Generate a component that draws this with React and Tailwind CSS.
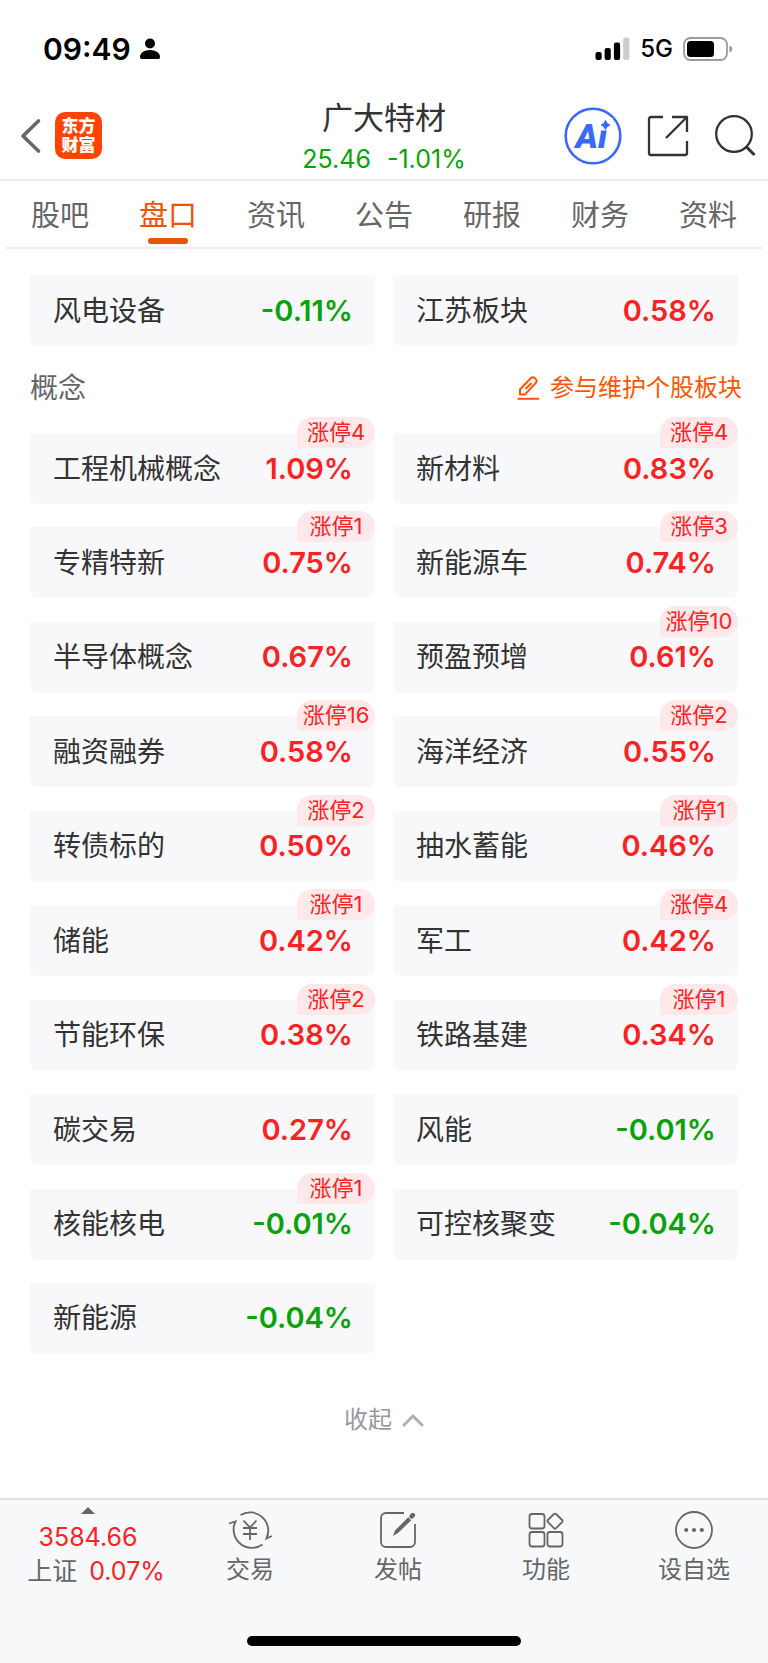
import React, { useState } from "react";

const sectors = [
  { name: "风电设备", change: "-0.11%" },
  { name: "江苏板块", change: "0.58%" },
];

const concepts = [
  { name: "工程机械概念", change: "1.09%", limitUp: 4 },
  { name: "新材料", change: "0.83%", limitUp: 4 },
  { name: "专精特新", change: "0.75%", limitUp: 1 },
  { name: "新能源车", change: "0.74%", limitUp: 3 },
  { name: "半导体概念", change: "0.67%" },
  { name: "预盈预增", change: "0.61%", limitUp: 10 },
  { name: "融资融券", change: "0.58%", limitUp: 16 },
  { name: "海洋经济", change: "0.55%", limitUp: 2 },
  { name: "转债标的", change: "0.50%", limitUp: 2 },
  { name: "抽水蓄能", change: "0.46%", limitUp: 1 },
  { name: "储能", change: "0.42%", limitUp: 1 },
  { name: "军工", change: "0.42%", limitUp: 4 },
  { name: "节能环保", change: "0.38%", limitUp: 2 },
  { name: "铁路基建", change: "0.34%", limitUp: 1 },
  { name: "碳交易", change: "0.27%" },
  { name: "风能", change: "-0.01%" },
  { name: "核能核电", change: "-0.01%", limitUp: 1 },
  { name: "可控核聚变", change: "-0.04%" },
  { name: "新能源", change: "-0.04%" },
];

const tabs = ["股吧", "盘口", "资讯", "公告", "研报", "财务", "资料"];

function StatusBar() {
  return (
    <div className="flex h-24 items-center justify-between pt-[2px] pr-[35px] pl-[43px] text-black">
      <div className="flex items-center gap-2">
        <span className="text-[30px] leading-9 font-semibold">09:49</span>
        <svg width="22" height="22" viewBox="0 0 22 22" fill="currentColor">
          <circle cx="11" cy="5.5" r="5" />
          <path d="M1 19c0-4 4-7 10-7s10 3 10 7c0 1.500-.6 2-1.600 2H2.600C1.600 21 1 20.500 1 19z" />
        </svg>
      </div>
      <div className="flex items-center gap-[10px]">
        <svg width="35" height="24" viewBox="0 0 35 24" fill="currentColor">
          <rect x="0.500" y="15" width="6.200" height="8" rx="2" />
          <rect x="9.600" y="11" width="6.200" height="12" rx="2" />
          <rect x="18.900" y="5.500" width="6.200" height="17.500" rx="2" />
          <rect x="28.200" y="0.500" width="6.200" height="22.500" rx="2" fill="#cccccc" />
        </svg>
        <span className="text-2xl leading-8 font-medium">5G</span>
        <svg width="50" height="24" viewBox="0 0 50 24">
          <rect x="1" y="1" width="43" height="22" rx="6.500" fill="none" stroke="#9b9b9b" strokeWidth="1.800" />
          <rect x="4" y="4" width="27" height="16" rx="3.500" fill="#000" />
          <path d="M46.500 8.500c1.800.6 2.800 1.900 2.800 3.500s-1 2.900-2.800 3.500z" fill="#9b9b9b" />
        </svg>
      </div>
    </div>
  );
}

function Header() {
  return (
    <header className="grid h-[85px] grid-cols-[1fr_auto_1fr] items-center border-b-2 border-[#ececec] px-3">
      <div className="flex items-center gap-[13px] pb-1 pl-2">
        <button aria-label="返回">
          <svg width="22" height="36" viewBox="0 0 22 36" fill="none" stroke="#666" strokeWidth="3.600" strokeLinecap="round" strokeLinejoin="round">
            <path d="M18.500 3L3 18l15.500 15" />
          </svg>
        </button>
        <a
          href="#home"
          className="flex h-[47px] w-[47px] flex-col items-center justify-center rounded-[10px] bg-[#ff4400] text-[17px] leading-[19px] font-black text-white"
        >
          <span>东方</span>
          <span>财富</span>
        </a>
      </div>
      <div className="text-center">
        <h1 className="text-[31px] leading-[42px] text-[#333]">广大特材</h1>
        <p className="flex gap-4 text-[25px] leading-10 text-[#09a309]">
          <span>25.46</span>
          <span>-1.01%</span>
        </p>
      </div>
      <div className="flex items-center justify-end gap-[25px] pb-1">
        <button aria-label="智能助手">
          <svg width="58" height="58" viewBox="0 0 58 58">
            <circle cx="29" cy="29" r="27.300" fill="none" stroke="#3a69ff" strokeWidth="2.600" />
            <text x="11.500" y="40.500" fontFamily="Roboto" fontSize="34" fontWeight="900" fontStyle="italic" fill="#3a69ff">
              Ai
            </text>
            <rect x="35" y="11" width="14" height="12.500" fill="#fff" />
            <path d="M41.500 13.500q1 3.500 4.500 4.500q-3.500 1-4.500 4.500q-1-3.500-4.500-4.500q3.500-1 4.500-4.500z" fill="#3a69ff" stroke="#3a69ff" />
          </svg>
        </button>
        <button aria-label="分享">
          <svg width="42" height="42" viewBox="0 0 42 42" fill="none" stroke="#333" strokeWidth="2.300" strokeLinejoin="round">
            <path d="M16 2H4a2 2 0 0 0-2 2v34a2 2 0 0 0 2 2h34a2 2 0 0 0 2-2V26" />
            <path d="M25 2h15v15M40 2L19 23" />
          </svg>
        </button>
        <button aria-label="搜索">
          <svg width="42" height="42" viewBox="0 0 42 42" fill="none" stroke="#333" strokeWidth="2.300">
            <circle cx="20" cy="19" r="17.800" />
            <path d="M32 31.500l8.500 8.500" strokeWidth="3" />
          </svg>
        </button>
      </div>
    </header>
  );
}

function Tabs({ active, onChange }) {
  return (
    <nav className="mx-[6px] flex h-[68px] border-b-2 border-[#ececec]">
      {tabs.map((tab) => (
        <button
          key={tab}
          onClick={() => onChange(tab)}
          className={`flex flex-1 flex-col items-center pt-[13px] text-[29px] leading-[44px] ${
            tab === active ? "text-[#ea5504]" : "text-[#666]"
          }`}
        >
          {tab}
          {tab === active && <span className="h-[6px] w-10 rounded-full bg-[#ea5504]" />}
        </button>
      ))}
    </nav>
  );
}

function BoardCard({ name, change, limitUp }) {
  const color = change.startsWith("-") ? "text-[#09a309]" : "text-[#fa2223]";

  return (
    <a href="#board" className="relative flex h-[71px] items-center justify-between rounded-b-lg bg-[#f8f8fb] pr-[22px] pl-[23px]">
      <span className="text-[28px] leading-10 text-[#333]">{name}</span>
      <span className={`text-[29px] leading-10 font-semibold ${color}`}>{change}</span>
      {limitUp && (
        <span className="absolute -top-4 right-0 min-w-[78px] rounded-t-2xl rounded-br-2xl bg-[#ffe8e9] px-[5px] text-center text-[22px] leading-[31px] text-[#fa2223]">
          涨停{limitUp}
        </span>
      )}
    </a>
  );
}

function NavItem({ label, children }) {
  return (
    <button className="flex flex-1 flex-col items-center pt-[7px] text-2xl leading-[34px] text-[#666]">
      <svg width="46" height="46" viewBox="0 0 46 46" fill="none" stroke="currentColor" strokeWidth="1.800">
        {children}
      </svg>
      {label}
    </button>
  );
}

function BottomBar() {
  return (
    <footer className="border-t-2 border-[#e0e1e4] bg-[#f7f8fa]">
      <div className="flex h-[119px]">
        <button className="flex w-[176px] flex-col items-center pt-[7px] text-[25px] text-[#fa2223]">
          <svg width="14" height="7" viewBox="0 0 14 7" fill="#666">
            <path d="M7 0l7 7H0z" />
          </svg>
          <span className="pt-[6px] leading-[34px]">3584.66</span>
          <span className="flex gap-3 pl-4 leading-[34px]">
            <span className="text-[#666]">上证</span>
            <span>0.07%</span>
          </span>
        </button>
        <NavItem label="交易">
          <path d="M13.500 8A18.300 18.300 0 0 1 39.500 31.500L45 29M39.500 31.500L41 26" />
          <path d="M35.500 37.500A18.300 18.300 0 0 1 8.500 14.500L2 16.500M8.500 14.500L6.500 20" />
          <path d="M16.500 13.500l6.500 7 6.500-7M23 20.500V33M16 21h14M16 27h14" />
        </NavItem>
        <NavItem label="发帖">
          <path d="M29 6H11a5 5 0 0 0-5 5v24a5 5 0 0 0 5 5h24a5 5 0 0 0 5-5V17" />
          <path d="M18 29l2-5.500L33.200 10.300l3 3L23 26z" fill="currentColor" stroke="none" />
          <path d="M36.600 9.400l1.300-1.300" strokeWidth="4.600" strokeLinecap="round" />
        </NavItem>
        <NavItem label="功能">
          <rect x="6.500" y="7" width="15" height="14.500" rx="2.500" />
          <rect x="6.500" y="25" width="15" height="14.500" rx="2.500" />
          <rect x="24.500" y="25" width="15" height="14.500" rx="2.500" />
          <rect x="26.300" y="8.300" width="11.500" height="11.500" rx="1.500" transform="rotate(45 32 14)" />
        </NavItem>
        <NavItem label="设自选">
          <circle cx="23" cy="23" r="18" />
          <g fill="currentColor" stroke="none">
            <circle cx="15.200" cy="23" r="2.100" />
            <circle cx="23" cy="23" r="2.100" />
            <circle cx="30.800" cy="23" r="2.100" />
          </g>
        </NavItem>
      </div>
      <div className="flex justify-center py-[17px]">
        <div className="h-[10px] w-[274px] rounded-full bg-black" />
      </div>
    </footer>
  );
}

export default function App() {
  const [activeTab, setActiveTab] = useState("盘口");
  const [expanded, setExpanded] = useState(true);
  const visible = expanded ? concepts : concepts.slice(0, 6);

  return (
    <div className="flex min-h-screen flex-col bg-white font-[Inter,'Noto_Sans_CJK_SC',sans-serif]">
      <StatusBar />
      <Header />
      <Tabs active={activeTab} onChange={setActiveTab} />

      <main className="flex flex-1 flex-col px-[30px] pt-[26px]">
        <div className="grid grid-cols-2 gap-x-[18px]">
          {sectors.map((item) => (
            <BoardCard key={item.name} {...item} />
          ))}
        </div>

        <div className="-mr-1 flex h-[87px] items-center justify-between pb-1">
          <h2 className="text-[28px] leading-10 text-[#666]">概念</h2>
          <a href="#edit" className="flex items-center gap-[10px] text-2xl leading-8 text-[#ff5500]">
            <svg width="24" height="24" viewBox="0 0 24 24" fill="none" stroke="currentColor" strokeWidth="2" strokeLinejoin="round">
              <path d="M4 18.500v-5L14.800 2.300a3 3 0 0 1 4.200 0l.6.6a3 3 0 0 1 0 4.200L9 18.500z" />
              <path d="M9.500 13l6-6" />
              <path d="M1.500 22.800h21.500" />
            </svg>
            参与维护个股板块
          </a>
        </div>

        <div className="grid flex-1 grid-cols-2 content-between gap-x-[18px] gap-y-5">
          {visible.map((item) => (
            <BoardCard key={item.name} {...item} />
          ))}
        </div>

        <button
          onClick={() => setExpanded(!expanded)}
          className="mt-12 mb-[60px] flex items-center justify-center gap-[10px] text-2xl leading-9 text-[#999]"
        >
          收起
          <svg width="22" height="14" viewBox="0 0 22 14" fill="none" stroke="#b0b0b0" strokeWidth="3" strokeLinecap="round">
            <path d="M2 12l9-9 9 9" />
          </svg>
        </button>
      </main>

      <BottomBar />
    </div>
  );
}
